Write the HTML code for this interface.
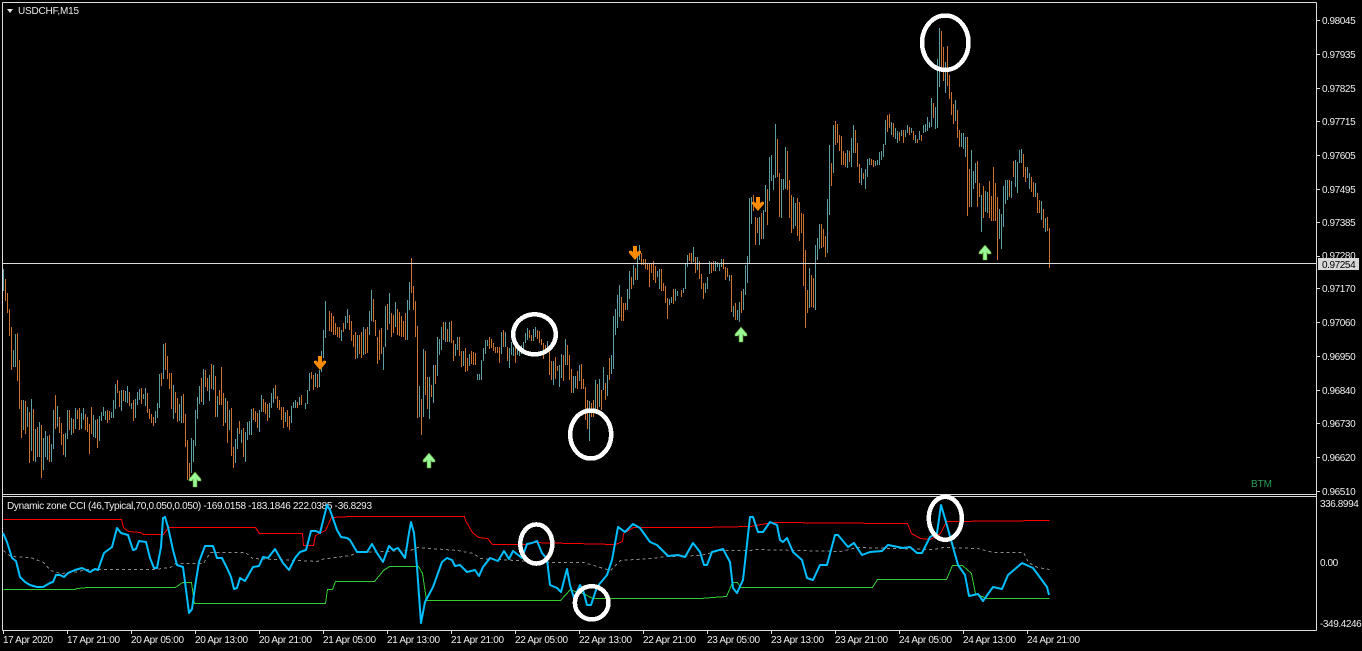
<!DOCTYPE html>
<html><head><meta charset="utf-8"><style>
html,body{margin:0;padding:0;background:#000;width:1362px;height:651px;overflow:hidden}
svg{display:block}
text{font-family:"Liberation Sans",sans-serif;font-size:10px;fill:#eeeeee}
.p{letter-spacing:-.42px}
</style></head><body>
<svg width="1362" height="651" viewBox="0 0 1362 651" xmlns="http://www.w3.org/2000/svg">
<rect width="1362" height="651" fill="#000"/>
<g transform="translate(.5 0)" fill="none" stroke-width="1" shape-rendering="crispEdges">
<path stroke="#5f9ea0" d="M3 269V291M13 350V367M15 334V367M23 400V430M27 407V427M31 399V451M35 429V462M39 422V457M43 438V470M45 431V457M47 436V460M51 444V462M53 410V449M57 406V427M65 433V457M67 410V439M71 418V435M75 408V429M81 413V429M83 408V420M93 415V437M95 420V438M99 416V441M101 412V421M103 407V416M105 411V420M111 412V418M113 400V418M115 384V409M121 390V411M125 391V402M127 386V403M131 403V409M135 399V418M137 392V405M139 389V400M143 394V399M145 388V406M155 411V423M157 403V418M159 374V408M163 344V379M173 385V419M179 404V421M181 396V423M191 438V473M193 440V462M195 410V446M197 397V419M199 386V404M203 369V405M209 375V401M213 365V390M217 396V417M225 398V423M229 410V430M235 439V463M237 428V449M241 430V443M245 432V462M247 422V440M249 421V435M251 409V435M259 410V432M261 395V412M269 403V418M271 393V408M273 388V403M285 412V422M291 406V423M293 402V408M295 400V408M299 397V405M305 403V409M307 390V404M309 373V391M315 373V387M319 370V387M321 351V372M323 330V358M325 301V338M341 330V341M345 316V329M347 309V323
M357 335V358M363 327V355M369 311V335M371 290V321M383 347V370M385 306V347M389 293V324M395 302V327M407 300V340M409 282V310M419 386V417M423 349V417M429 377V419M433 365V403M437 337V376M439 339V355M441 327V350M445 322V342M449 322V342M455 344V356M457 337V350M463 351V366M469 354V366M477 374V380M479 374V380M481 360V380M483 348V361M485 340V354M487 340V346M501 332V354M505 332V347M509 348V368M511 342V355M513 347V356M517 350V355M519 350V356M521 345V354M523 342V351M525 333V343M527 328V340M533 329V341M535 327V337M547 341V350M553 361V385M559 365V387M561 354V378M565 339V365M573 376V393M575 376V388M579 365V381M589 401V441M595 380V410M599 379V407M603 367V390M607 375V396M611 355V374M613 316V369M615 309V335M617 295V328M619 285V317M627 289V310M629 271V299M633 265V285M637 257V280M639 245V260M657 271V277M659 269V289M669 299V305M671 297V303M675 289V301M677 291V296M683 288V293M685 264V289M687 255V267M693 247V262M697 257V270
M705 283V293M707 277V289M709 261V274M715 261V271M717 262V267M719 263V271M721 259V267M729 275V281M733 306V317M737 310V320M739 302V322M743 289V310M745 265V295M747 256V283M749 198V263M751 197V224M759 217V245M763 210V239M765 185V212M769 157V201M771 155V181M773 175V190M775 124V178M781 179V218M783 179V190M785 147V189M793 197V229M795 203V226M809 268V308M815 245V310M817 238V260M819 224V249M827 199V253M829 145V215M833 125V173M847 150V168M851 138V167M853 125V153M861 168V185M865 169V189M867 159V177M869 158V165M875 161V166M877 160V165M879 152V165M881 151V160M883 144V157M885 120V145M891 122V135M895 128V139M897 131V143M901 130V136M905 130V137M907 125V133M911 128V133M915 135V143M919 131V140M923 125V133M925 124V132M927 117V131M929 122V128M931 98V127M935 107V129M937 59V128M939 28V87M945 62V93M955 100V121M961 133V147M963 133V149M965 137V157M971 150V207M973 171V189M975 163V183M981 195V232M985 191V212M987 192V213M999 209V239M1001 214V249M1003 186V227M1005 180V204M1007 180V200M1011 181V198M1015 160V187M1017 162V193M1019 150V163M1021 149V163M1027 167V178M1029 173V189M1035 183V197M1041 201V220M1045 218V232"/>
<path stroke="#cb7230" d="M5 279V301M7 293V313M9 309V336M11 327V370M17 333V381M19 360V409M21 400V438M25 401V434M29 412V463M33 409V461M37 427V457M41 425V478M49 435V462M55 395V429M59 417V433M61 423V445M63 434V455M69 410V430M73 419V433M77 410V419M79 408V430M85 414V430M87 417V432M89 424V454M91 407V434M97 419V448M107 410V423M109 411V420M117 380V393M119 391V407M123 390V401M129 392V406M133 400V421M141 388V404M147 393V413M149 409V419M151 414V423M153 417V426M161 373V386M165 343V370M167 356V379M169 373V389M171 373V409M175 392V413M177 398V422M183 394V423M185 414V447M187 440V480M189 463V480M201 378V402M205 370V387M207 378V391M211 364V389M215 376V417M219 390V405M221 367V405M223 393V426M227 401V443M231 408V456M233 447V468M239 421V434M243 428V457M253 408V420M255 411V422M257 413V428M263 399V412M265 402V414M267 404V421M275 385V399M277 396V408M279 400V410M281 407V420M283 407V428M287 410V427M289 416V430M297 402V408M301 395V405M311 372V379M313 375V390M317 374V388M329 311V331M331 313V332M333 316V335M335 323V335M337 327V337M339 327V338M343 323V332M349 315V330
M351 321V341M353 335V347M355 332V359M359 335V354M361 332V358M365 329V354M367 327V353M373 299V322M375 320V336M377 337V364M379 330V360M381 328V354M387 304V330M391 313V337M393 315V333M397 309V335M399 312V336M401 316V337M403 321V337M405 313V340M411 258V293M413 286V310M415 301V337M417 326V418M421 399V435M425 351V395M427 377V409M431 385V397M435 365V384M443 322V340M447 329V342M451 321V343M453 340V361M459 337V356M461 351V367M465 348V372M467 358V371M471 351V364M473 352V365M475 353V365M489 337V349M491 339V348M493 343V351M495 347V353M497 347V353M499 347V363M503 330V347M507 347V361M515 347V363M529 330V338M531 335V341M537 330V339M539 331V343M541 339V345M543 343V359M545 345V351M549 351V375M551 361V380M555 357V379M557 366V371M563 355V381M567 345V365M569 355V380M571 369V393M577 371V389M581 364V389M583 379V389M585 387V420M587 400V429M591 403V417M593 400V417M597 384V410M601 390V410M605 383V400M609 358V380M621 297V321M623 303V321M625 303V310M631 277V289M635 268V280M641 253V265M643 259V265M645 259V269M647 263V270M649 263V287M651 263V273M653 261V280M655 266V283M661 269V291M663 283V291M665 286V303M667 298V319M673 289V304M681 290V297M689 253V261M691 253V263M695 257V273M699 261V279
M701 274V289M703 283V299M711 262V273M713 261V271M723 259V269M725 267V280M727 268V277M731 275V312M735 303V320M741 291V313M753 195V211M755 217V245M757 218V233M761 213V239M767 189V225M777 139V177M779 173V217M787 151V190M789 180V218M791 195V233M797 198V236M799 202V241M801 213V233M803 214V286M805 250V328M807 290V313M811 275V307M813 278V308M821 224V248M823 229V247M825 236V257M831 163V186M835 121V145M837 124V143M839 135V151M841 136V165M843 151V165M845 153V167M849 151V162M855 130V153M857 143V167M859 164V183M863 173V179M871 159V165M873 160V167M887 115V132M889 114V128M893 123V137M899 132V141M903 130V143M909 127V135M913 131V140M917 139V143M921 135V141M933 103V118M941 31V71M943 47V81M947 46V86M949 75V99M951 92V115M953 104V124M957 110V138M959 130V147M967 137V216M969 169V207M977 161V207M979 183V197M983 186V218M989 181V218M991 196V221M993 167V221M995 183V221M997 197V260M1009 180V197M1013 161V177M1023 154V177M1025 167V182M1031 177V192M1033 182V197M1037 193V213M1039 200V213M1043 209V228M1047 217V231M1049 228V268"/>
</g>
<g fill="none" stroke="#dcdcdc" stroke-width="1" shape-rendering="crispEdges">
<path d="M2.5 2.5H1316.5M2.5 2.5V630.5M1316.5 2.5V630.5M2.5 494.5H1316.5M2.5 496.5H1316.5M2.5 630.5H1316.5M2.5 263.5H1316.5"/>
<path d="M1317 20.5h3M1317 54.5h3M1317 88.5h3M1317 121.5h3M1317 155.5h3M1317 189.5h3M1317 222.5h3M1317 256.5h3M1317 288.5h3M1317 322.5h3M1317 356.5h3M1317 390.5h3M1317 423.5h3M1317 457.5h3M1317 491.5h3"/>
<path d="M3.5 631v3M67.5 631v3M131.5 631v3M195.5 631v3M259.5 631v3M323.5 631v3M387.5 631v3M451.5 631v3M515.5 631v3M579.5 631v3M643.5 631v3M707.5 631v3M771.5 631v3M835.5 631v3M899.5 631v3M963.5 631v3M1027.5 631v3"/>
</g>
<polygon points="7,9 13,9 10,13" fill="#e4e4e4"/>
<text x="18" y="14" textLength="61" lengthAdjust="spacing">USDCHF,M15</text>
<text x="1251" y="487" style="fill:#2e9e5c" textLength="21" lengthAdjust="spacing">BTM</text>
<text x="7" y="509" textLength="365" lengthAdjust="spacing">Dynamic zone CCI (46,Typical,70,0.050,0.050) -169.0158 -183.1846 222.0385 -36.8293</text>
<g fill="none" stroke-linejoin="round" transform="translate(.5 .5)" shape-rendering="crispEdges">
<polyline stroke="#8a8a8a" stroke-width="1" stroke-dasharray="3 3" points="3,550 10,556 30,557 43,562 50,570 60,573 73,572 87,569 153,569 170,567 175,563 203,563 210,552 245,552 252,558 297,560 317,561 320,559 350,555 357,552 410,550 417,547 457,550 473,553 480,558 550,562 583,562 610,570 620,560 650,558 667,556 700,555 720,550 750,550 755,549 840,551 857,547 933,549 943,547 977,548 993,552 1023,552 1028,562 1037,567 1049,569"/>
<polyline stroke="#ff0000" stroke-width="1" points="3,519 121,519 123,527 128,531 140,532 143,534 163,534 168,527 255,527 259,533 302,533 303,545 313,545 315,535 325,530 331,517 350,516 464,516 465,520 472,532 478,537 487,538 492,544 528,544 530,542 615,544 622,541 623,533 633,527 700,527 750,526 772,522 893,523 907,523 911,533 920,538 930,539 940,533 946,521 1049,520"/>
<polyline stroke="#32cd32" stroke-width="1" points="3,589 74,589 77,588 87,587 175,587 182,582 191,582 194,603 325,603 327,589 332,589 335,581 350,581 374,581 383,570 389,566 418,566 422,573 426,600 560,600 570,589 577,592 583,593 592,598 700,598 712,597 726,596 732,582 737,582 740,587 872,587 877,579 946,579 952,565 962,565 971,573 975,593 986,598 1049,598"/>
</g>
<polyline fill="none" stroke-linejoin="round" stroke="#00bfff" stroke-width="2" points="3,533 7,542 12,558 16,561 20,577 25,582 30,585 37,587 43,587 50,583 53,582 56,575 60,575 64,577 68,573 75,570 82,568 90,572 95,569 98,570 104,553 112,547 117,528 121,533 128,535 133,550 136,549 139,541 146,542 150,558 154,568 157,568 161,547 163,518 165,517 168,527 173,550 177,565 183,567 185,582 189,613 192,609 195,587 199,562 205,546 213,546 217,558 222,558 227,568 231,577 234,589 237,588 240,578 245,581 253,567 259,566 263,557 268,558 275,549 283,563 289,570 295,558 300,552 306,550 311,531 316,531 320,533 327,505 330,510 337,530 341,537 347,538 350,540 357,552 367,552 372,544 377,553 383,562 389,546 393,550 398,548 405,558 409,533 411,522 414,533 417,567 421,623 425,602 433,587 442,562 447,558 452,560 455,566 460,565 467,572 475,570 479,576 483,567 490,558 498,561 504,551 509,559 513,551 522,558 527,544 532,543 537,541 542,553 547,559 550,585 557,588 561,592 567,569 570,585 574,598 580,585 583,590 587,605 591,605 597,587 607,575 612,560 618,527 625,532 633,524 640,528 650,542 657,545 668,556 678,555 685,557 693,543 700,552 704,565 707,565 712,552 723,549 730,562 733,588 737,593 743,580 750,517 753,517 758,532 763,532 770,522 777,525 780,540 783,542 787,538 793,552 802,560 807,578 813,580 820,565 827,565 835,535 838,535 848,547 854,543 862,555 870,552 882,551 888,545 903,548 910,547 917,553 922,553 930,537 937,533 941,505 946,522 953,547 958,565 965,575 969,596 978,594 983,601 993,587 1002,589 1008,575 1022,563 1033,568 1047,587 1049,595"/>
<g fill="#98fb98" stroke="#5f8f2f" stroke-width=".6">
<polygon points="195,472 201,479 201,481 198,481 197,479.5 197,487 193,487 193,479.5 192,481 189,481 189,479"/>
<polygon points="429,453 435,460 435,462 432,462 431,460.5 431,468 427,468 427,460.5 426,462 423,462 423,460"/>
<polygon points="741,327 747,334 747,336 744,336 743,334.5 743,342 739,342 739,334.5 738,336 735,336 735,334"/>
<polygon points="985,245 991,252 991,254 988,254 987,252.5 987,260 983,260 983,252.5 982,254 979,254 979,252"/>
</g>
<g fill="#ff8c00">
<polygon points="318,356 322,356 322,362 324,360.5 326,361 326,363 320,370 314,363 314,361 316,360.5 318,362"/>
<polygon points="633,246 637,246 637,252 639,250.5 641,251 641,253 635,260 629,253 629,251 631,250.5 633,252"/>
<polygon points="756,197 760,197 760,203 762,201.5 764,202 764,204 758,211 752,204 752,202 754,201.5 756,203"/>
</g>
<g fill="none" stroke="#fff" stroke-width="4.5" shape-rendering="crispEdges">
<ellipse cx="945.3" cy="42.7" rx="23.2" ry="27.2"/>
<ellipse cx="534.5" cy="334.3" rx="21.3" ry="20"/>
<ellipse cx="590.7" cy="434.5" rx="20.5" ry="24"/>
<ellipse cx="536.3" cy="544" rx="16" ry="19.6"/>
<ellipse cx="591.7" cy="602.8" rx="16.8" ry="16.6"/>
<ellipse cx="945.3" cy="518.3" rx="16.5" ry="21.5"/>
</g>
<g class="p">
<text x="1322" y="24">0.98045</text>
<text x="1322" y="58">0.97935</text>
<text x="1322" y="92">0.97825</text>
<text x="1322" y="125">0.97715</text>
<text x="1322" y="159">0.97605</text>
<text x="1322" y="193">0.97495</text>
<text x="1322" y="226">0.97385</text>
<text x="1322" y="259">0.97280</text>
<text x="1322" y="292">0.97170</text>
<text x="1322" y="326">0.97060</text>
<text x="1322" y="360">0.96950</text>
<text x="1322" y="394">0.96840</text>
<text x="1322" y="427">0.96730</text>
<text x="1322" y="461">0.96620</text>
<text x="1322" y="495">0.96510</text>
<text x="1320" y="507">336.8994</text>
<text x="1320" y="566">0.00</text>
<text x="1320" y="627">-349.4246</text>
</g>
<rect x="1318" y="258" width="41" height="12" fill="#d8d8d8"/>
<text class="p" x="1322" y="268" style="fill:#000">0.97254</text>
<g>
<text x="3" y="643" textLength="50" lengthAdjust="spacing">17 Apr 2020</text>
<text x="67" y="643" textLength="53" lengthAdjust="spacing">17 Apr 21:00</text>
<text x="131" y="643" textLength="53" lengthAdjust="spacing">20 Apr 05:00</text>
<text x="195" y="643" textLength="53" lengthAdjust="spacing">20 Apr 13:00</text>
<text x="259" y="643" textLength="53" lengthAdjust="spacing">20 Apr 21:00</text>
<text x="323" y="643" textLength="53" lengthAdjust="spacing">21 Apr 05:00</text>
<text x="387" y="643" textLength="53" lengthAdjust="spacing">21 Apr 13:00</text>
<text x="451" y="643" textLength="53" lengthAdjust="spacing">21 Apr 21:00</text>
<text x="515" y="643" textLength="53" lengthAdjust="spacing">22 Apr 05:00</text>
<text x="579" y="643" textLength="53" lengthAdjust="spacing">22 Apr 13:00</text>
<text x="643" y="643" textLength="53" lengthAdjust="spacing">22 Apr 21:00</text>
<text x="707" y="643" textLength="53" lengthAdjust="spacing">23 Apr 05:00</text>
<text x="771" y="643" textLength="53" lengthAdjust="spacing">23 Apr 13:00</text>
<text x="835" y="643" textLength="53" lengthAdjust="spacing">23 Apr 21:00</text>
<text x="899" y="643" textLength="53" lengthAdjust="spacing">24 Apr 05:00</text>
<text x="963" y="643" textLength="53" lengthAdjust="spacing">24 Apr 13:00</text>
<text x="1027" y="643" textLength="53" lengthAdjust="spacing">24 Apr 21:00</text>
</g>
</svg>
</body></html>
